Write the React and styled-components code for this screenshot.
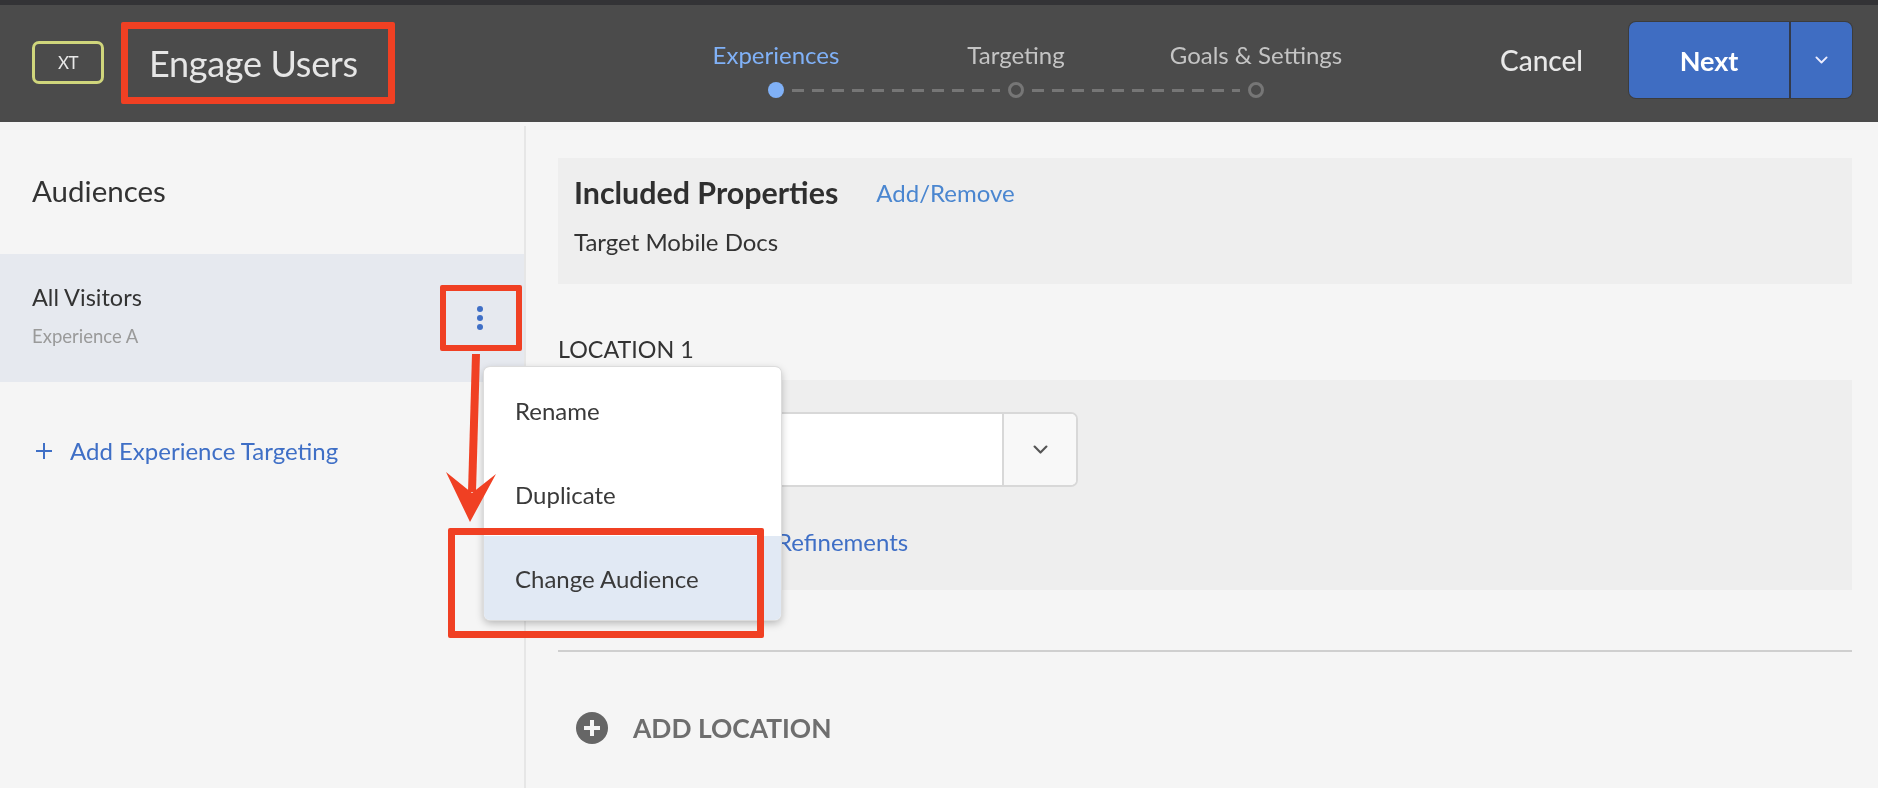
import React from "react";
import styled, { createGlobalStyle } from "styled-components";

const Global = createGlobalStyle`
  html, body { margin: 0; padding: 0; background: #f5f5f5; }
  body { font-family: Lato, "Open Sans", sans-serif; overflow: hidden; }
  * { box-sizing: border-box; }
`;

const RED = "#f04023";

const Page = styled.div`
  position: relative;
  width: 1878px;
  height: 788px;
  overflow: hidden;
  display: flex;
  flex-direction: column;
  background: #f5f5f5;
  color: #2f2f2f;
  filter: blur(0.5px);
`;

const Header = styled.header`
  height: 122px;
  flex: none;
  border-top: 5px solid #333336;
  background: #4b4b4b;
  display: grid;
  grid-template-columns: 656px 720px 1fr;
  align-items: center;
`;

const Brand = styled.div`
  display: flex;
  align-items: center;
  padding-left: 32px;
  gap: 17px;
  margin-top: -2px;
`;

const Badge = styled.span`
  width: 72px;
  height: 43px;
  border: 3px solid #d0d67c;
  border-radius: 7px;
  color: #e8e8e8;
  font-size: 17px;
  display: flex;
  align-items: center;
  justify-content: center;
  letter-spacing: -0.5px;
`;

const Title = styled.h1`
  width: 274px;
  height: 82px;
  margin: 0;
  border: 7px solid ${RED};
  border-radius: 2px;
  padding-left: 21px;
  font-size: 36px;
  font-weight: 400;
  color: #e6e6e6;
  display: flex;
  align-items: center;
  letter-spacing: -0.3px;
`;

const Stepper = styled.nav`
  display: grid;
  grid-template-columns: repeat(3, 240px);
  row-gap: 13px;
  margin-top: 12px;
`;

const StepLabel = styled.span`
  text-align: center;
  font-size: 24px;
  line-height: 28px;
  color: ${(p) => (p.$active ? "#80b1f7" : "#c4c4c4")};
`;

const Track = styled.div`
  grid-column: 1 / -1;
  display: flex;
  align-items: center;
  padding: 0 112px;
  height: 16px;
`;

const Dot = styled.span`
  flex: none;
  width: 16px;
  height: 16px;
  border-radius: 50%;
  background: ${(p) => (p.$active ? "#80b1f7" : "transparent")};
  border: ${(p) => (p.$active ? "none" : "3px solid #767676")};
`;

const Dashes = styled.span`
  flex: 1;
  height: 3px;
  margin: 0 8px;
  background: repeating-linear-gradient(90deg, #767676 0 12px, transparent 12px 20px);
`;

const Actions = styled.div`
  display: flex;
  align-items: center;
  justify-content: flex-end;
  padding-right: 26px;
  margin-top: -7px;
`;

const Cancel = styled.button`
  border: 0;
  background: none;
  color: #e8e8e8;
  font: 500 28px Lato, sans-serif;
  margin-right: 46px;
  padding: 0;
`;

const SplitButton = styled.div`
  display: flex;
  width: 223px;
  height: 76px;
  border-radius: 7px;
  overflow: hidden;
  background: #3f6dc2;
  box-shadow: 0 0 0 1px #3c3c3c;
`;

const NextButton = styled.button`
  flex: 1;
  border: 0;
  background: none;
  color: #fff;
  font: 700 27px Lato, sans-serif;
  padding-top: 2px;
`;

const ChevronButton = styled.button`
  width: 63px;
  border: 0;
  border-left: 2px solid #333a4a;
  background: none;
  color: #eef;
  display: flex;
  align-items: center;
  justify-content: center;
`;

const Body = styled.div`
  flex: 1;
  display: flex;
  margin-top: 4px;
`;

const Sidebar = styled.aside`
  width: 526px;
  flex: none;
  border-right: 2px solid #e6e6e6;
`;

const SideTitle = styled.h2`
  height: 128px;
  margin: 0;
  padding-left: 32px;
  display: flex;
  align-items: center;
  font-size: 29.5px;
  font-weight: 400;
  color: #333;
`;

const AudienceRow = styled.div`
  height: 128px;
  background: #e6e9ef;
  display: flex;
  align-items: center;
  justify-content: space-between;
  padding: 0 2px 0 32px;
`;

const AudienceText = styled.div`
  display: flex;
  flex-direction: column;
  gap: 15px;
  margin-top: -6px;
`;

const AudienceName = styled.span`
  font-size: 23.5px;
  line-height: 27px;
  color: #333;
`;

const AudienceSub = styled.span`
  font-size: 18.5px;
  line-height: 21px;
  color: #9a9a9a;
`;

const Kebab = styled.button`
  width: 82px;
  height: 66px;
  border: 6px solid ${RED};
  border-radius: 2px;
  background: none;
  color: #3f6fc6;
  padding: 0 2px 0 0;
  display: flex;
  align-items: center;
  justify-content: center;
`;

const AddTarget = styled.a`
  display: flex;
  align-items: center;
  gap: 18px;
  margin: 54px 0 0 36px;
  font-size: 24px;
  line-height: 30px;
  color: #3f6fc6;
`;

const Content = styled.main`
  flex: 1;
  padding: 32px 26px 0 32px;
`;

const Panel = styled.section`
  background: #eeeeee;
`;

const PropsPanel = styled(Panel)`
  height: 126px;
  padding: 16px 16px 0;
`;

const PropsHead = styled.div`
  display: flex;
  align-items: center;
  gap: 38px;
  height: 36px;
`;

const PropsTitle = styled.h3`
  margin: 0;
  font-size: 30.4px;
  font-weight: 700;
  color: #2f2f2f;
`;

const PlainLink = styled.a`
  font-size: 24px;
  color: ${(p) => p.$color || "#4a86d0"};
`;

const PropsValue = styled.p`
  margin: 17px 0 0;
  font-size: 24px;
  line-height: 30px;
  color: #333;
`;

const LocationLabel = styled.div`
  margin: 51px 0 17px 0;
  font-size: 23.3px;
  line-height: 28px;
  color: #333;
`;

const LocationPanel = styled(Panel)`
  height: 210px;
  padding: 32px 17px 0;
`;

const Select = styled.div`
  width: 503px;
  height: 75px;
  display: flex;
  border: 2px solid #d8d8d8;
  border-radius: 7px;
  background: #fff;
  overflow: hidden;
`;

const SelectField = styled.div`
  flex: 1;
`;

const SelectCaret = styled.div`
  width: 74px;
  border-left: 2px solid #d8d8d8;
  background: #f8f8f8;
  color: #555;
  display: flex;
  align-items: center;
  justify-content: center;
`;

const RefineLink = styled(PlainLink)`
  display: block;
  margin: 40px 0 0 153px;
  line-height: 30px;
  color: #3f6fc6;
`;

const Rule = styled.hr`
  border: 0;
  border-top: 2px solid #cfcfcf;
  margin: 60px 0 0;
`;

const AddLocation = styled.div`
  display: flex;
  align-items: center;
  gap: 25px;
  margin: 60px 0 0 18px;
  font-size: 26.4px;
  font-weight: 700;
  color: #6e6e6e;
`;

const Menu = styled.ul`
  position: absolute;
  left: 484px;
  top: 367px;
  width: 297px;
  margin: 0;
  padding: 1px 0 0;
  list-style: none;
  background: #fff;
  border-radius: 6px;
  overflow: hidden;
  box-shadow: 0 0 0 1px #dcdcdc, 0 3px 8px rgba(0, 0, 0, 0.28);
`;

const MenuItem = styled.li`
  height: 84px;
  padding-left: 31px;
  display: flex;
  align-items: center;
  font-size: 24px;
  color: #3a3a3a;
  background: ${(p) => (p.$active ? "#e1e9f4" : "#fff")};
`;

const Callout = styled.div`
  position: absolute;
  left: 448px;
  top: 528px;
  width: 316px;
  height: 110px;
  border: 7px solid ${RED};
  border-radius: 2px;
`;

const ArrowSvg = styled.svg`
  position: absolute;
  left: 0;
  top: 0;
`;

const ChevronIcon = ({ w = 14, sw = 2 }) => (
  <svg width={w} height={w * 0.6} viewBox="0 0 14 8.4" fill="none" stroke="currentColor" strokeWidth={sw} strokeLinecap="round" strokeLinejoin="round">
    <path d="M1.5 1.5 7 7l5.5-5.5" />
  </svg>
);

export default function App() {
  return (
    <Page>
      <Global />
      <Header>
        <Brand>
          <Badge>XT</Badge>
          <Title>Engage Users</Title>
        </Brand>
        <Stepper>
          <StepLabel $active>Experiences</StepLabel>
          <StepLabel>Targeting</StepLabel>
          <StepLabel>Goals &amp; Settings</StepLabel>
          <Track>
            <Dot $active />
            <Dashes />
            <Dot />
            <Dashes />
            <Dot />
          </Track>
        </Stepper>
        <Actions>
          <Cancel>Cancel</Cancel>
          <SplitButton>
            <NextButton>Next</NextButton>
            <ChevronButton aria-label="More">
              <ChevronIcon w={13} sw={2} />
            </ChevronButton>
          </SplitButton>
        </Actions>
      </Header>
      <Body>
        <Sidebar>
          <SideTitle>Audiences</SideTitle>
          <AudienceRow>
            <AudienceText>
              <AudienceName>All Visitors</AudienceName>
              <AudienceSub>Experience A</AudienceSub>
            </AudienceText>
            <Kebab aria-label="Options">
              <svg width="8" height="26" viewBox="0 0 8 26" fill="currentColor">
                <circle cx="4" cy="4" r="3" />
                <circle cx="4" cy="13" r="3" />
                <circle cx="4" cy="22" r="3" />
              </svg>
            </Kebab>
          </AudienceRow>
          <AddTarget>
            <svg width="16" height="16" viewBox="0 0 16 16" stroke="currentColor" strokeWidth="2">
              <path d="M8 0v16M0 8h16" />
            </svg>
            Add Experience Targeting
          </AddTarget>
        </Sidebar>
        <Content>
          <PropsPanel>
            <PropsHead>
              <PropsTitle>Included Properties</PropsTitle>
              <PlainLink>Add/Remove</PlainLink>
            </PropsHead>
            <PropsValue>Target Mobile Docs</PropsValue>
          </PropsPanel>
          <LocationLabel>LOCATION 1</LocationLabel>
          <LocationPanel>
            <Select>
              <SelectField />
              <SelectCaret>
                <ChevronIcon w={15} sw={2} />
              </SelectCaret>
            </Select>
            <RefineLink>Add Refinements</RefineLink>
          </LocationPanel>
          <Rule />
          <AddLocation>
            <svg width="32" height="32" viewBox="0 0 32 32">
              <circle cx="16" cy="16" r="16" fill="#666" />
              <path d="M16 8v16M8 16h16" stroke="#f5f5f5" strokeWidth="4" />
            </svg>
            ADD LOCATION
          </AddLocation>
        </Content>
      </Body>
      <Menu>
        <MenuItem>Rename</MenuItem>
        <MenuItem>Duplicate</MenuItem>
        <MenuItem $active>Change Audience</MenuItem>
      </Menu>
      <Callout />
      <ArrowSvg width="1878" height="788" viewBox="0 0 1878 788" fill={RED} pointerEvents="none">
        <path d="M476 354 472 492" stroke={RED} strokeWidth="8" fill="none" />
        <polygon points="446,472 472,493 496,474 470,522" />
      </ArrowSvg>
    </Page>
  );
}
